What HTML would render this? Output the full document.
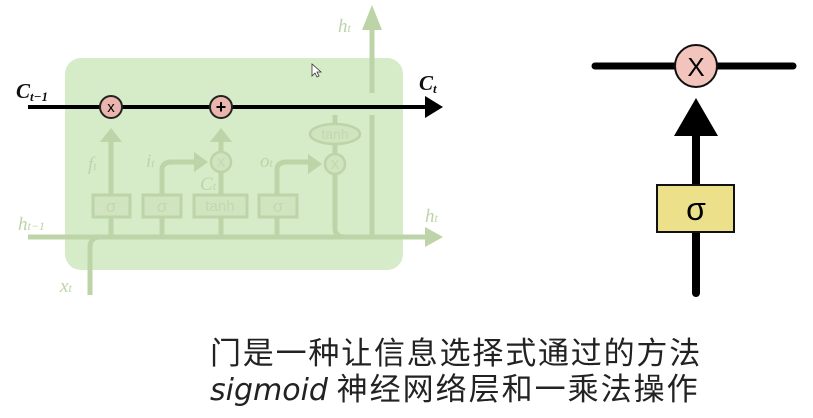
<!DOCTYPE html><html><head><meta charset="utf-8"><style>
body{margin:0;width:813px;height:418px;background:#fff;overflow:hidden;position:relative;font-family:"Liberation Sans","Noto Sans CJK SC",sans-serif}
.t{position:absolute;font-size:31px;line-height:36px;color:#222;white-space:nowrap}
</style></head><body>
<svg width="813" height="418" style="position:absolute;left:0;top:0">
<g fill="none" stroke="#bcd4a8" stroke-width="5">
<rect x="65" y="58" width="338" height="212" rx="16" fill="#d6ebc8" stroke="none"/>
<line x1="372" y1="30" x2="372" y2="93"/>
<line x1="372" y1="115" x2="372" y2="236"/>
<path d="M28 237 H425"/>
<path d="M90 295 V248 Q90 237 100 237"/>
<line x1="111" y1="237" x2="111" y2="140"/>
<path d="M162 237 V170 Q162 162 172 162 H195"/>
<line x1="221" y1="237" x2="221" y2="140"/>
<path d="M277 237 V170 Q277 162 287 162 H310"/>
<path d="M335 115 V228 Q335 237 345 237"/>
<g stroke-width="3">
<rect x="93" y="195" width="37" height="22" fill="#d0e4bf"/>
<rect x="143" y="195" width="38" height="22" fill="#d0e4bf"/>
<rect x="194" y="195" width="53" height="22" fill="#d0e4bf"/>
<rect x="259" y="195" width="38" height="22" fill="#d0e4bf"/>
</g>
<ellipse cx="335" cy="134" rx="25" ry="10" fill="#d0e4bf" stroke-width="2.5"/>
<circle cx="221" cy="162" r="10" fill="#d0e4bf" stroke-width="2.5"/>
<circle cx="335" cy="164" r="10" fill="#d0e4bf" stroke-width="2.5"/>
</g>
<g fill="#bcd4a8">
<polygon points="372,5 362,30 382,30"/>
<polygon points="443,237 425,227 425,247"/>
<polygon points="111,128 100,142 122,142"/>
<polygon points="221,128 210,142 232,142"/>
<polygon points="208,162 194,152 194,172"/>
<polygon points="322,164 308,154 308,174"/>
</g>
<g font-family="Liberation Sans" fill="#c2d8b0" font-size="17" text-anchor="middle">
<text x="111" y="212">σ</text><text x="162" y="212">σ</text><text x="220" y="211" font-size="15">tanh</text><text x="278" y="212">σ</text>
<text x="335" y="139" font-size="14">tanh</text>
<text x="221" y="167" font-size="13">X</text><text x="335" y="169" font-size="13">X</text>
</g>
<g font-family="Liberation Serif" font-style="italic" fill="#bcd4a8" font-size="19">
<text x="338" y="32">h<tspan font-size="12">t</tspan></text>
<text x="18" y="230">h<tspan font-size="12">t−1</tspan></text>
<text x="425" y="222">h<tspan font-size="12">t</tspan></text>
<text x="60" y="292">x<tspan font-size="12">t</tspan></text>
<text x="88" y="170">f<tspan font-size="12">t</tspan></text>
<text x="146" y="167">i<tspan font-size="12">t</tspan></text>
<text x="260" y="167">o<tspan font-size="12">t</tspan></text>
<text x="200" y="190">C<tspan font-size="12">t</tspan></text>
</g>
<line x1="28" y1="107" x2="428" y2="107" stroke="#000" stroke-width="4"/>
<polygon points="443,107 425,96 425,118" fill="#000"/>
<g font-family="Liberation Serif" font-style="italic" font-weight="bold" font-size="21" fill="#111">
<text x="16" y="98">C<tspan font-size="13" dy="3">t−1</tspan></text>
<text x="419" y="90">C<tspan font-size="13" dy="3">t</tspan></text>
</g>
<circle cx="111" cy="107" r="11" fill="#eab5ad" stroke="#222" stroke-width="2"/>
<circle cx="221" cy="107" r="11" fill="#eab5ad" stroke="#222" stroke-width="2"/>
<text x="111" y="112" font-family="Liberation Sans" font-size="15" text-anchor="middle">x</text>
<text x="221" y="113" font-family="Liberation Sans" font-size="18" font-weight="bold" text-anchor="middle">+</text>
<path d="M312 64 l0 12 l3 -3 l2 4 l2 -1 l-2 -4 l4 0 z" fill="#fff" stroke="#333" stroke-width="0.8"/>
<line x1="595" y1="66" x2="793" y2="66" stroke="#000" stroke-width="7" stroke-linecap="round"/>
<line x1="696" y1="130" x2="696" y2="293" stroke="#000" stroke-width="8" stroke-linecap="round"/>
<polygon points="696,98 674,136 718,136" fill="#000"/>
<circle cx="696" cy="66" r="21" fill="#f2c4bc" stroke="#111" stroke-width="2"/>
<text x="696" y="76" font-family="Liberation Sans" font-size="26" text-anchor="middle">X</text>
<rect x="657" y="185" width="77" height="47" fill="#ede08a" stroke="#111" stroke-width="2"/>
<text x="696" y="220" font-family="Liberation Sans" font-size="32" text-anchor="middle">σ</text>
</svg>
<div class="t" style="left:210px;top:336px;letter-spacing:1.8px">门是一种让信息选择式通过的方法</div>
<div class="t" style="left:210px;top:372px"><span style="font-family:'DejaVu Sans',sans-serif;font-style:italic;font-size:30px">sigmoid</span> <span style="letter-spacing:2px">神经网络层和一乘法操作</span></div>
</body></html>
